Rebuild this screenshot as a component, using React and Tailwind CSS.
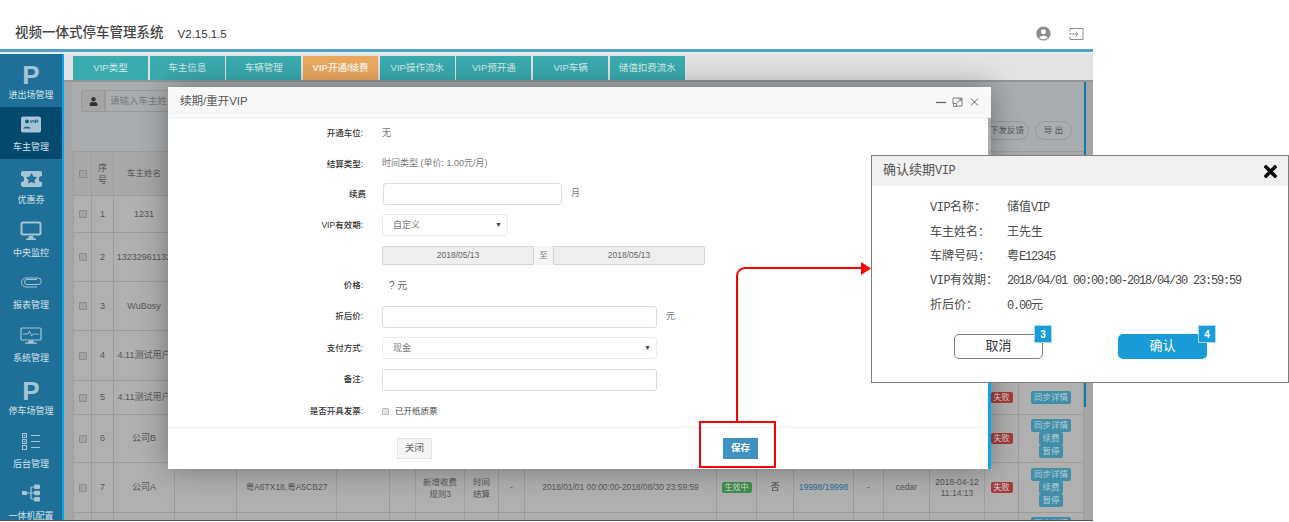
import { FaTimes, FaUser, FaStar } from "react-icons/fa";
import { MdAccountCircle } from "react-icons/md";

const SANS = "font-['Liberation_Sans','Noto_Sans_CJK_SC',sans-serif]";

const tabs = ["VIP类型", "车主信息", "车辆管理", "VIP开通/续费", "VIP操作流水", "VIP预开通", "VIP车辆", "储值扣费流水"];
const colWidths = [18, 22, 61, 62, 100, 53, 26, 49, 34, 26, 192, 40, 37, 60, 30, 46, 55, 34, 65];

const IconP = () => <span className="block h-[24px] text-[26px] leading-[24px] font-bold text-[#a6c4d4]">P</span>;

const IconVip = () => (
  <svg width="22" height="17" viewBox="0 0 22 17" className="mb-[6px]">
    <rect width="20" height="16" x="1" y="0.5" rx="2" fill="#a6c4d4" />
    <circle cx="7" cy="5.5" r="2" fill="#1a5f86" />
    <path d="M3 12.5c1-2.500 7-2.500 8 0z" fill="#1a5f86" />
    <path d="M10.500 4l1 3 1-3M14 4v3M15.500 7V4h1.500a1 1 0 0 1 0 2h-1.500" fill="none" stroke="#1a5f86" strokeWidth="0.9" />
  </svg>
);

const IconTicket = () => (
  <span className="relative mb-[5px] block h-[16px] w-[21px] rounded-[2px] bg-[#a6c4d4]">
    <span className="absolute top-[5px] left-[-2px] h-[6px] w-[5px] rounded-full bg-[#1f7099]" />
    <span className="absolute top-[5px] right-[-2px] h-[6px] w-[5px] rounded-full bg-[#1f7099]" />
    <FaStar className="absolute top-[2px] left-[5px] text-[#1f7099]" size={11} />
  </span>
);

const IconMonitor = () => (
  <svg width="22" height="20" viewBox="0 0 22 20" className="mb-[4px]">
    <rect x="1.500" y="1.500" width="19" height="12" rx="1.500" fill="none" stroke="#a6c4d4" strokeWidth="2" />
    <path d="M9 15h4l1 3H8z" fill="#a6c4d4" />
    <rect x="6" y="17.500" width="10" height="1.500" fill="#a6c4d4" />
  </svg>
);

const IconClip = () => (
  <svg width="22" height="12" viewBox="0 0 22 12" className="mb-[9px]">
    <path d="M17 3.500H7a2.500 2.500 0 0 0 0 5h11a2.800 2.800 0 0 0 0-6.500H6a4.500 4.500 0 0 0 0 9h11" fill="none" stroke="#a6c4d4" strokeWidth="1" />
  </svg>
);

const IconPulse = () => (
  <svg width="22" height="18" viewBox="0 0 22 18" className="mb-[5px]">
    <rect x="1" y="1" width="20" height="12" rx="1" fill="none" stroke="#a6c4d4" strokeWidth="1.200" />
    <path d="M3 7h5l1.500-3 2 5 1.500-2h6" fill="none" stroke="#a6c4d4" strokeWidth="0.9" />
    <path d="M8.500 13.500h5l.5 2h-6zM5 15.500h12v1.200H5z" fill="#a6c4d4" />
  </svg>
);

const IconList = () => (
  <svg width="20" height="18" viewBox="0 0 20 18" className="mb-[5px]">
    <g fill="none" stroke="#a6c4d4" strokeWidth="1">
      <rect x="1.500" y="0.500" width="4" height="4" />
      <rect x="1.500" y="6.500" width="4" height="4" />
      <rect x="1.500" y="12.500" width="4" height="4" />
      <path d="M10 2.500h9M10 8.500h9M10 14.500h9" />
    </g>
    <path d="M2.800 1.800h1.500v1.500H2.800zM2.800 7.800h1.500v1.500H2.800z" fill="#a6c4d4" />
  </svg>
);

const IconTree = () => (
  <svg width="19" height="18" viewBox="0 0 19 18" className="mb-[6px]">
    <path d="M4 9h5M9 3v12M9 3h4M9 9h4M9 15h4" fill="none" stroke="#a6c4d4" strokeWidth="1.200" />
    <g fill="#a6c4d4">
      <rect x="0" y="7" width="5" height="4" rx="1" />
      <rect x="12" y="0.500" width="6" height="4.500" rx="1.200" />
      <rect x="12" y="6.800" width="6" height="4.500" rx="1.200" />
      <rect x="12" y="13" width="6" height="4.500" rx="1.200" />
    </g>
  </svg>
);

const navItems = [
  { label: "进出场管理", icon: <IconP /> },
  { label: "车主管理", icon: <IconVip />, active: true },
  { label: "优惠券", icon: <IconTicket /> },
  { label: "中央监控", icon: <IconMonitor /> },
  { label: "报表管理", icon: <IconClip /> },
  { label: "系统管理", icon: <IconPulse /> },
  { label: "停车场管理", icon: <IconP /> },
  { label: "后台管理", icon: <IconList /> },
  { label: "一体机配置", icon: <IconTree /> },
];

const Sidebar = () => (
  <div className="h-full w-[64px] shrink-0 overflow-hidden border-r-2 border-[#06a7ea] bg-[#1f7099]">
    {navItems.map((item) => (
      <div
        key={item.label}
        className={`flex h-[52.700px] flex-col items-center justify-end pb-[6px] text-[9px] leading-[12px] text-[#d5e2e9] ${item.active ? "bg-[#034a6e]" : ""}`}
      >
        {item.icon}
        <span className="mt-[2px]">{item.label}</span>
      </div>
    ))}
  </div>
);

const Pill = ({ children, className = "" }) => (
  <span className={`inline-block h-[13px] rounded-[2px] bg-[#418ea9] text-center text-[8.500px] leading-[13px] text-[#b5ccd6] ${className}`}>
    {children}
  </span>
);

const Status = ({ label, green }) => (
  <span className={`inline-block rounded-[2px] px-[3px] text-[8px] leading-[11px] text-[#d8d8d8] ${green ? "bg-[#3f8f4d]" : "bg-[#a73c3c]"}`}>
    {label}
  </span>
);

const Actions = ({ more = true }) => (
  <div className="flex flex-col items-center">
    <Pill className="w-[40px]">同步详情</Pill>
    {more && <Pill className="w-[24px]">续费</Pill>}
    {more && <Pill className="w-[24px]">暂停</Pill>}
  </div>
);

const Check = () => <span className="inline-block h-[8px] w-[8px] rounded-[1px] border border-[#8c8c8c] bg-[#a2a2a2] align-middle" />;

// rows 1-4 sit behind the confirm dialog on the right, so no actions there
const rows = [
  { no: 1, name: "1231", h: 37, hidden: true },
  { no: 2, name: "13232961132", h: 49, hidden: true },
  { no: 3, name: "WuBosy", h: 49, hidden: true },
  { no: 4, name: "4.11测试用户", h: 50, hidden: true },
  { no: 5, name: "4.11测试用户", h: 34, failed: true, more: false },
  { no: 6, name: "公司B", h: 48, failed: true },
  {
    no: 7,
    name: "公司A",
    h: 50,
    failed: true,
    plate: "粤A6TX18,粤A5CB27",
    rule: "新增收费规则3",
    settle: "时间结算",
    range: "2018/01/01 00:00:00-2018/08/30 23:59:59",
    state: "生效中",
    invoice: "否",
    count: "19998/19998",
    user: "cedar",
    dash: "-",
    time: "2018-04-12 11:14:13",
  },
  { no: 8, name: "", h: 30, more: false, top: true },
];

const Cell = ({ children, className = "" }) => (
  <td className={`overflow-hidden border border-[#9d9d9d] p-0 text-center align-middle whitespace-normal ${className}`}>{children}</td>
);

const DataTable = () => (
  <table className="w-[1010px] table-fixed border-collapse text-[8.500px] leading-[11px] text-[#575757]">
    <colgroup>
      {colWidths.map((w, i) => (
        <col key={i} style={{ width: w }} />
      ))}
    </colgroup>
    <thead>
      <tr className="h-[44px] bg-[#a8a8a8]">
        <Cell><Check /></Cell>
        <Cell className="px-[6px] text-[9px] leading-[12px]">序号</Cell>
        <Cell>车主姓名</Cell>
        {colWidths.slice(3).map((_, i) => (
          <Cell key={i} />
        ))}
      </tr>
    </thead>
    <tbody>
      {rows.map((r) => (
        <tr key={r.no} className="bg-[#b0b0b0]" style={{ height: r.h }}>
          <Cell><Check /></Cell>
          <Cell className="text-[9px]">{r.no}</Cell>
          <Cell className="text-[9px] whitespace-nowrap">{r.name}</Cell>
          <Cell />
          <Cell>{r.plate}</Cell>
          <Cell />
          <Cell />
          <Cell className="px-[7px] leading-[12px]">{r.rule}</Cell>
          <Cell className="px-[7px] leading-[12px]">{r.settle}</Cell>
          <Cell>{r.dash}</Cell>
          <Cell className="text-[8.400px] whitespace-nowrap">{r.range}</Cell>
          <Cell>{r.state && <Status label={r.state} green />}</Cell>
          <Cell className="text-[9px] text-[#3a3a3a]">{r.invoice}</Cell>
          <Cell className="text-[#2b6b95]">{r.count}</Cell>
          <Cell>{r.dash}</Cell>
          <Cell>{r.user}</Cell>
          <Cell>{r.time}</Cell>
          <Cell>{r.failed && <Status label="失败" />}</Cell>
          <Cell className={r.top ? "pt-[4px] !align-top" : ""}>{!r.hidden && <Actions more={r.more !== false} />}</Cell>
        </tr>
      ))}
    </tbody>
  </table>
);

const Field = ({ label, h, labelClass = "", children }) => (
  <div className="flex items-center" style={{ height: h }}>
    <div className={`w-[195px] shrink-0 text-right text-[8.500px] font-medium text-[#333] ${labelClass}`}>{label}</div>
    <div className="ml-[19px] flex items-center text-[9px] text-[#777]">{children}</div>
  </div>
);

const Input = ({ className = "" }) => <div className={`h-[22px] rounded-[3px] border border-[#dcdcdc] bg-white ${className}`} />;

const Select = ({ label, className = "" }) => (
  <div className={`flex h-[22px] items-center justify-between rounded-[3px] border border-[#ececec] bg-white pr-[5px] pl-[10px] text-[9px] text-[#777] ${className}`}>
    <span className="pt-[2px]">{label}</span>
    <span className="text-[7px] text-[#444]">▼</span>
  </div>
);

const DateBox = ({ value, className = "" }) => (
  <div className={`flex h-[19px] items-center justify-center border border-[#d4d4d4] bg-[#eeeeee] text-[8.500px] text-[#666] ${className}`}>{value}</div>
);

const RenewModal = () => (
  <div className="absolute top-[87px] left-[168px] z-10 flex h-[382px] w-[823px] flex-col shadow-[0_0_28px_rgba(0,0,0,0.35)]">
    <div className="flex h-[31px] shrink-0 items-center justify-between border-b border-[#eeeeee] bg-[#f8f8f8] pr-[11px] pl-[12px]">
      <span className="text-[11.500px] text-[#555]">续期/重开VIP</span>
      <svg width="44" height="10" viewBox="0 0 44 10" fill="none" stroke="#666">
        <path d="M0 5.500h10" strokeWidth="1.300" />
        <path d="M17 7V1h9v8h-6M21 6l4-4M22.500 2H25v2.500M17.500 6.500h3v3h-3z" strokeWidth="0.800" />
        <path d="M35 1.500l7 7M42 1.500l-7 7" strokeWidth="1" />
      </svg>
    </div>
    <div className="flex min-h-0 flex-1">
      <div className="flex flex-1 flex-col bg-white">
        <Field label="开通车位:" h={31}>无</Field>
        <Field label="结算类型:" h={30}>时间类型 (单价: 1.00元/月)</Field>
        <Field label="续费" h={30} labelClass="relative left-[3px]">
          <Input className="ml-[1px] w-[179px]" />
          <span className="ml-[9px]">月</span>
        </Field>
        <Field label="VIP有效期:" h={32}><Select label="自定义" className="w-[126px]" /></Field>
        <Field label="" h={29}>
          <DateBox value="2018/05/13" className="w-[152px] rounded-l-[2px]" />
          <div className="flex h-[19px] w-[19px] items-center justify-center bg-[#f5f5f5] text-[8.500px]">至</div>
          <DateBox value="2018/05/13" className="w-[152px] rounded-r-[2px]" />
        </Field>
        <Field label="价格:" h={30}><span className="ml-[7px] text-[10px] text-[#666]">? 元</span></Field>
        <Field label="折后价:" h={33}>
          <Input className="w-[275px]" />
          <span className="ml-[9px]">元</span>
        </Field>
        <Field label="支付方式:" h={30}><Select label="现金" className="w-[275px]" /></Field>
        <Field label="备注:" h={33}><Input className="w-[275px]" /></Field>
        <Field label="是否开具发票:" h={31}>
          <span className="h-[7px] w-[7px] rounded-[1px] border border-[#bbbbbb] bg-[#e5e5e5]" />
          <span className="ml-[6px] text-[8.500px] text-[#444]">已开纸质票</span>
        </Field>
        <div className="h-[41px] border-t border-[#efefef]">
          <div className="flex items-start pt-[10px] pl-[229px]">
            <span className="flex h-[21px] w-[35px] items-center justify-center border border-[#e3e3e3] bg-[#f5f5f5] text-[9.500px] text-[#666]">关闭</span>
            <span className="ml-[291px] flex h-[21px] w-[35px] items-center justify-center bg-[#3f92bf] text-[9.500px] font-bold text-white">保存</span>
          </div>
        </div>
      </div>
      <div className="flex w-[3px] flex-col">
        <div className="h-[37px] shrink-0" />
        <div className="flex-1 bg-[#0aa5e8]" />
      </div>
    </div>
  </div>
);

const confirmRows = [
  { label: "VIP名称：", value: "储值VIP" },
  { label: "车主姓名：", value: "王先生" },
  { label: "车牌号码：", value: "粤E12345" },
  { label: "VIP有效期：", value: "2018/04/01 00:00:00-2018/04/30 23:59:59" },
  { label: "折后价：", value: "0.00元" },
];

// latin runs are half the cjk width in this dialog
const MixedText = ({ text, tight = false }) => (
  <>
    {text.split(/([\x20-\x7e]+)/).map((part, i) =>
      /[\x20-\x7e]/.test(part) ? (
        <span key={i} className={`text-[12px] ${tight ? "tracking-[-1.200px]" : "tracking-[-0.500px]"}`}>{part}</span>
      ) : (
        <span key={i}>{part}</span>
      )
    )}
  </>
);

const Badge = ({ n, className = "" }) => (
  <span className={`absolute flex h-[18px] w-[18px] items-center justify-center border border-[#a5dcf3] bg-[#1a9cd9] ${SANS} text-[10px] font-bold text-white ${className}`}>
    {n}
  </span>
);

const ConfirmDialog = () => (
  <div className="absolute top-[155px] left-[871px] z-20 h-[228px] w-[418px] border border-[#7f7f7f] bg-white font-['Liberation_Mono','Noto_Sans_CJK_SC',monospace] text-[#4a4a4a]">
    <div className="flex h-[30px] items-center justify-between bg-[#f0f0f0] pr-[8px] pl-[11px] text-[13px] text-[#555]">
      <span><MixedText text="确认续期VIP" /></span>
      <FaTimes size={19} className="text-black" />
    </div>
    <div className="flex flex-col pt-[10px] pl-[58px]">
      {confirmRows.map((r) => (
        <div key={r.label} className="flex h-[24.400px] items-center text-[12px] whitespace-nowrap">
          <span className="w-[77px] shrink-0"><MixedText text={r.label} /></span>
          <span><MixedText text={r.value} tight /></span>
        </div>
      ))}
    </div>
    <div className="absolute top-[178px] left-[82px] flex gap-[75px]">
      <div className="relative flex h-[25px] w-[89px] items-center justify-center rounded-[5px] border border-[#808080] pt-[1px] text-[13px] text-[#333]">
        取消
        <Badge n="3" className="top-[-10px] right-[-10px]" />
      </div>
      <div className="relative flex h-[25px] w-[89px] items-center justify-center rounded-[5px] bg-[#189bd7] pt-[1px] text-[13px] text-white">
        确认
        <Badge n="4" className="top-[-9px] right-[-9px]" />
      </div>
    </div>
  </div>
);

const Annotation = () => (
  <>
    <div className="absolute top-[421px] left-[699px] z-30 h-[47px] w-[77px] border-2 border-[#ff0000]" />
    <svg className="absolute top-[260px] left-[730px] z-30" width="142" height="162" viewBox="0 0 142 162" fill="none">
      <path d="M7 161V16a8 8 0 0 1 8-8h118" stroke="#ff0000" strokeWidth="2" />
      <path d="M131 2l10 6.500-10 6.500z" fill="#ff0000" />
    </svg>
  </>
);

export default function App() {
  return (
    <div className={`relative h-[522px] w-[1289px] overflow-hidden bg-white ${SANS}`}>
      <div className="w-[1093px]">
        <header className="flex h-[49px] items-center pt-[18px] pl-[15px]">
          <span className="text-[13.500px] font-medium text-[#444]">视频一体式停车管理系统</span>
          <span className="mt-[2px] ml-[14px] text-[11.500px] text-[#333]">V2.15.1.5</span>
          <div className="ml-auto flex items-center gap-[17px] pr-[9px] text-[#8c8c8c]">
            <MdAccountCircle size={17} />
            <svg width="15" height="12" viewBox="0 0 15 12" fill="none" stroke="#8c8c8c" strokeWidth="1">
              <path d="M1 3.500V.5h13v11H1V8.500M0 6h9M6.500 3.500L9 6l-2.500 2.500" />
            </svg>
          </div>
        </header>
        <div className="h-[3px] bg-[#4fa3c8]" />
        <div className="h-[2px] bg-[#e9eef0]" />
        <div className="flex h-[467px] border-b border-[#555]">
          <Sidebar />
          <div className="flex min-w-0 flex-1 flex-col">
            <div className="flex h-[26px] shrink-0 items-end gap-[1.700px] bg-[#e3e3e3] pl-[9px]">
              {tabs.map((t, i) => (
                <span
                  key={t}
                  className={`flex h-[24px] w-[75px] items-center justify-center text-[9.500px] text-[#d4eaea] ${i === 3 ? "bg-[#eba95f] font-bold text-[#fbefe0]" : "bg-[#3aabaf]"}`}
                >
                  {t}
                </span>
              ))}
            </div>
            <div className="flex min-h-0 flex-1 overflow-hidden border-t-2 border-[#959595] bg-[#a5a5a5] pl-[8px]">
              <div className="w-[1012px] shrink-0">
                <div className="relative h-[69px] bg-[#a9adb0] pt-[8px] pl-[9px]">
                  <div className="flex h-[22px] w-[200px] items-center">
                    <span className="flex h-full w-[24px] items-center justify-center rounded-l-[2px] border border-[#999] bg-[#a5a5a5]">
                      <FaUser size={9} className="text-[#333]" />
                    </span>
                    <span className="flex h-full flex-1 items-center border border-[#999] pl-[4px] text-[9.500px] whitespace-nowrap text-[#7b7b7b]">请输入车主姓名</span>
                  </div>
                  <div className="absolute top-[39px] right-[12px] flex gap-[6px]">
                    <span className="flex h-[19px] w-[44px] items-center justify-center rounded-full border border-[#979a9c] text-[8.500px] text-[#555]">下发反馈</span>
                    <span className="flex h-[19px] w-[37px] items-center justify-center rounded-full border border-[#979a9c] text-[8.500px] text-[#555]">导 出</span>
                  </div>
                </div>
                <div className="pl-[1px]">
                  <DataTable />
                </div>
              </div>
              <div className="flex-1">
                <div className="h-[325px] w-[2px] bg-[#0a7cb0]" />
              </div>
            </div>
          </div>
        </div>
      </div>
      <RenewModal />
      <ConfirmDialog />
      <Annotation />
    </div>
  );
}
